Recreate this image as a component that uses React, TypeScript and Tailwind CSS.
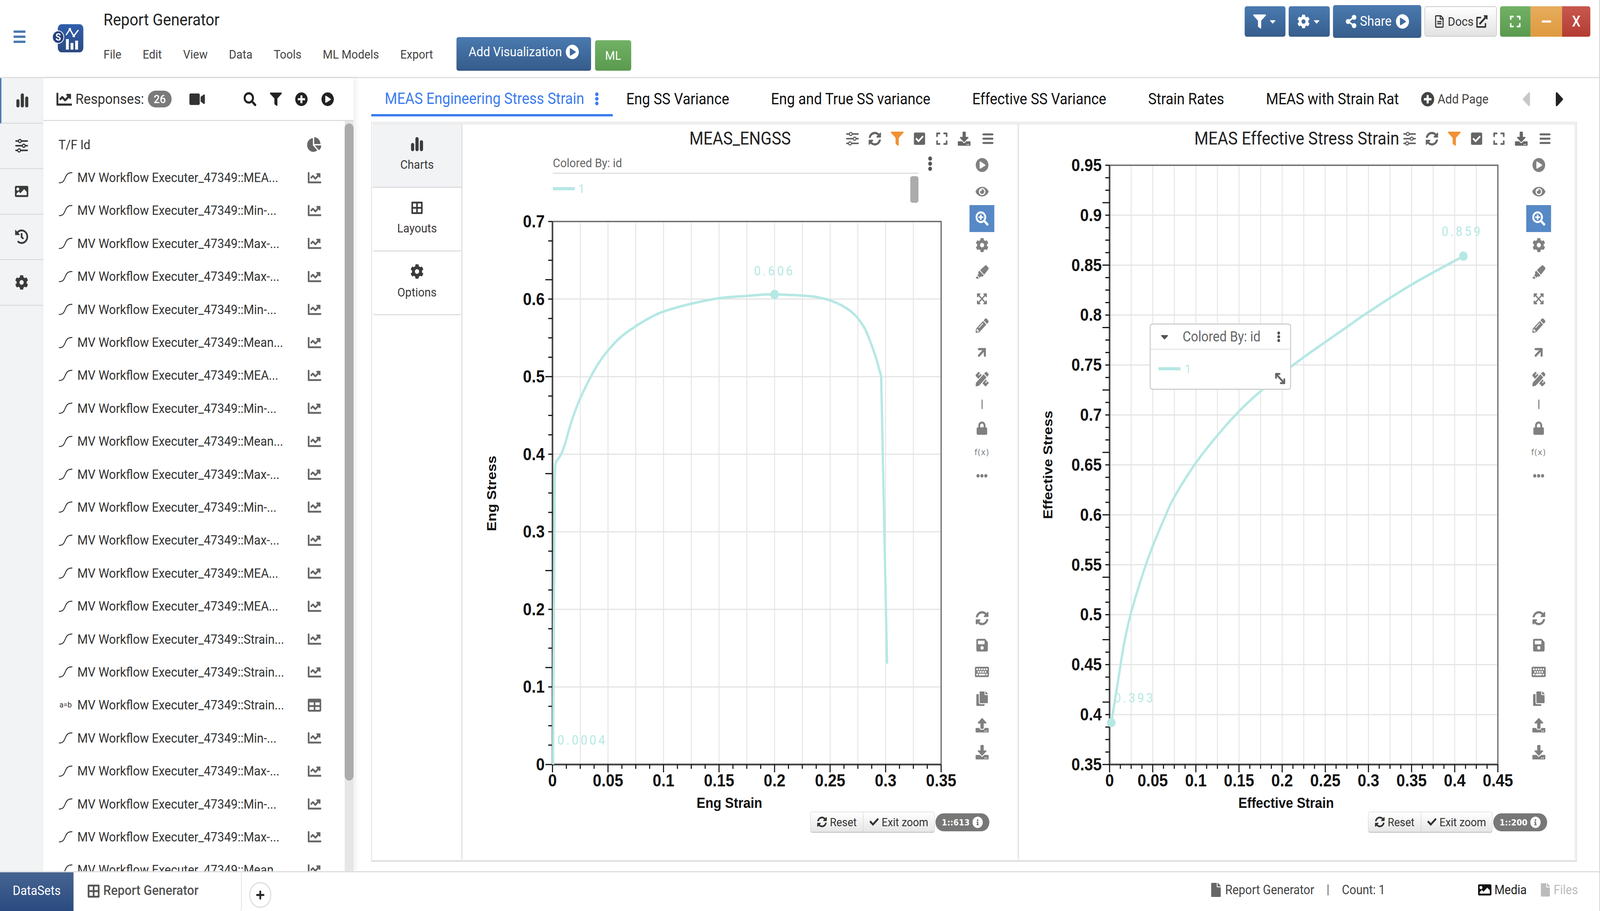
import type { ReactNode } from 'react';
import {
  FaBorderAll, FaCaretDown, FaCaretLeft, FaCaretRight, FaChartLine, FaChartPie, FaCheck, FaCheckSquare, FaCog,
  FaCopy, FaDownload, FaEllipsisH, FaEllipsisV, FaExpand, FaExpandArrowsAlt, FaExternalLinkAlt, FaEye, FaFile,
  FaFilter, FaHighlighter, FaHistory, FaImage, FaInfoCircle, FaKeyboard, FaLock, FaMinus, FaPencilAlt, FaPencilRuler,
  FaPlayCircle, FaPlus, FaPlusCircle, FaRegFileAlt, FaSave, FaSearch, FaSearchPlus, FaShareAlt, FaSyncAlt,
  FaTable, FaUpload, FaVideo,
} from 'react-icons/fa';
import { ArrowUpRight, MoveDiagonal2 } from 'lucide-react';

const TEAL = '#b6e8e4';
const DESIGN_WIDTH = 4512;

function BarsIcon({ className }: { className?: string }) {
  return (
    <svg viewBox="0 0 34 36" className={className} fill="currentColor">
      <rect x="0" y="15" width="9" height="21" rx="4.5" />
      <rect x="12.5" y="0" width="9" height="36" rx="4.5" />
      <rect x="25" y="8" width="9" height="28" rx="4.5" />
    </svg>
  );
}

function SlidersIcon({ className, knob = 'white' }: { className?: string; knob?: string }) {
  return (
    <svg viewBox="0 0 36 36" className={className} fill="none" stroke="currentColor" strokeWidth="4" strokeLinecap="round">
      <path d="M2 6h32M2 18h32M2 30h32" />
      <circle cx="13" cy="6" r="4" fill={knob} strokeWidth="3" />
      <circle cx="24" cy="18" r="4" fill={knob} strokeWidth="3" />
      <circle cx="11" cy="30" r="4" fill={knob} strokeWidth="3" />
    </svg>
  );
}

function IntegralIcon() {
  return (
    <svg viewBox="0 0 40 30" className="w-[40px] h-[30px] shrink-0" fill="none" stroke="#333" strokeWidth="2.5" strokeLinecap="round">
      <path d="M2 28C12 28 15 24 19 15C23 6 27 2 38 2" />
    </svg>
  );
}

function MenuLines() {
  return (
    <svg viewBox="0 0 32 30" className="w-[32px] h-[30px]" fill="none" stroke="currentColor" strokeWidth="5" strokeLinecap="round">
      <path d="M3 4h26M3 15h26M3 26h26" />
    </svg>
  );
}

function Logo() {
  return (
    <svg viewBox="0 0 90 76" className="w-[90px] h-[76px]">
      <defs>
        <linearGradient id="logoFill" x1="0" y1="0" x2="0" y2="1">
          <stop offset="0" stopColor="#2f5eac" />
          <stop offset="1" stopColor="#2d4a80" />
        </linearGradient>
      </defs>
      <rect x="17" y="2" width="72" height="72" rx="11" fill="url(#logoFill)" />
      <circle cx="18" cy="35" r="16" fill="#24427a" stroke="white" strokeWidth="2" />
      <text x="18" y="44" textAnchor="middle" fontSize="25" fontWeight="700" fill="white" fontFamily="Roboto, sans-serif">S</text>
      <path d="M40 30l11-15 11 17 13-15" fill="none" stroke="white" strokeWidth="3.5" />
      <circle cx="51" cy="15" r="3.5" fill="white" />
      <circle cx="62" cy="32" r="3.5" fill="white" />
      <rect x="40" y="40" width="8" height="27" fill="white" />
      <rect x="53" y="50" width="8" height="17" fill="white" />
      <rect x="66" y="44" width="8" height="23" fill="white" />
    </svg>
  );
}

const responses: [string, string][] = [
  ['s', 'MEA...'], ['s', 'Min-...'], ['s', 'Max-...'], ['s', 'Max-...'], ['s', 'Min-...'], ['s', 'Mean...'],
  ['s', 'MEA...'], ['s', 'Min-...'], ['s', 'Mean...'], ['s', 'Max-...'], ['s', 'Min-...'], ['s', 'Max-...'],
  ['s', 'MEA...'], ['s', 'MEA...'], ['s', 'Strain...'], ['s', 'Strain...'], ['t', 'Strain...'], ['s', 'Min-...'],
  ['s', 'Max-...'], ['s', 'Min-...'], ['s', 'Max-...'], ['s', 'Mean...'],
];

function Rail() {
  const items = [
    <BarsIcon className="w-[34px] h-[36px]" />,
    <SlidersIcon className="w-[38px] h-[36px]" knob="#f1f3f5" />,
    <FaImage className="text-[38px]" />,
    <FaHistory className="text-[38px]" />,
    <FaCog className="text-[38px]" />,
  ];
  return (
    <div className="w-[122px] shrink-0 bg-[#f1f3f5] flex flex-col text-[#3a3a3a]">
      {items.map((icon, i) => (
        <div
          key={i}
          className={`h-[116.5px] flex items-center justify-center border-b-[3px] border-[#dedede] ${i === 0 ? 'border-l-4 border-l-[#4a7ab0]' : ''}`}
        >
          {icon}
        </div>
      ))}
    </div>
  );
}

function ResponsesPanel() {
  return (
    <div className="w-[875px] shrink-0 bg-white shadow-[6px_0_14px_rgba(0,0,0,0.07)] flex flex-col z-10">
      <div className="h-[110px] shrink-0 border-b-[3px] border-[#dedede] flex items-center pl-[37px] text-[#333]">
        <FaChartLine className="text-[44px] mr-[10px]" />
        <span className="text-[37.5px] w-[204px] whitespace-nowrap">Responses:</span>
        <span className="w-[67px] h-[43px] rounded-full bg-[#7a7a7a] text-white text-[30px] font-medium flex items-center justify-center">26</span>
        <FaVideo className="text-[44px] ml-[50px]" />
        <FaSearch className="text-[36px] ml-[109px] text-[#222]" />
        <FaFilter className="text-[34px] ml-[38px] text-[#222]" />
        <FaPlusCircle className="text-[36px] ml-[37px] text-[#222]" />
        <FaPlayCircle className="text-[36px] ml-[38px] text-[#222]" />
      </div>
      <div className="flex-1 flex min-h-0">
        <div className="flex-1 overflow-hidden pt-[18px] pl-[43px] pr-[66px] text-[#333]">
          <div className="h-[84.4px] flex items-center justify-between">
            <span className="text-[34px]">T/F Id</span>
            <FaChartPie className="text-[40px] text-[#666]" />
          </div>
          {responses.map(([kind, tail], i) => (
            <div key={i} className="h-[84.4px] flex items-center">
              {kind === 's' ? (
                <IntegralIcon />
              ) : (
                <span className="w-[40px] shrink-0 text-[21px] text-center">a=b</span>
              )}
              <span className="ml-[13px] text-[34px] whitespace-nowrap">MV Workflow Executer_47349::{tail}</span>
              <span className="ml-auto text-[#666]">
                {kind === 's' ? <FaChartLine className="text-[38px]" /> : <FaTable className="text-[38px]" />}
              </span>
            </div>
          ))}
        </div>
        <div className="w-[25px] shrink-0 bg-[#e6e6e6]">
          <div className="w-full h-[1682px] mt-[6px] rounded-full bg-[#ababab]" />
        </div>
      </div>
    </div>
  );
}

function TabStrip() {
  const tabs = ['Eng SS Variance', 'Eng and True SS variance', 'Effective SS Variance', 'Strain Rates', 'MEAS with Strain Rat'];
  return (
    <div className="h-[112px] shrink-0 flex items-center pb-[4px] text-[40px] text-[#111]">
      <div className="h-[98px] w-[681px] shrink-0 self-start pt-[14px] border-b-[6px] border-[#3b7cf0] flex items-center pl-[38px] text-[#3b7cf0]">
        <span className="whitespace-nowrap">MEAS Engineering Stress Strain</span>
        <FaEllipsisV className="text-[34px] ml-[19px]" />
      </div>
      <div className="flex items-center ml-[38px] gap-[118px]">
        {tabs.map((tab) => (
          <span key={tab} className="whitespace-nowrap">{tab}</span>
        ))}
      </div>
      <FaPlusCircle className="text-[38px] ml-[62px] text-[#444]" />
      <span className="text-[33.5px] text-[#444] ml-[9px] whitespace-nowrap">Add Page</span>
      <FaCaretLeft className="text-[62px] text-[#c8c8c8] ml-[74px]" />
      <FaCaretRight className="text-[62px] text-[#222] ml-[34px]" />
    </div>
  );
}

function SubTabs() {
  const items: [ReactNode, string][] = [
    [<BarsIcon className="w-[34px] h-[36px]" />, 'Charts'],
    [<FaBorderAll className="text-[36px]" />, 'Layouts'],
    [<FaCog className="text-[38px]" />, 'Options'],
  ];
  return (
    <div className="w-[250px] shrink-0 flex flex-col text-[#3a3a3a]">
      {items.map(([icon, label], i) => (
        <div
          key={label}
          className={`h-[163px] flex flex-col items-center justify-center gap-[10px] border-b-[3px] border-[#dedede] ${i === 0 ? 'bg-[#f1f3f5] rounded-t-md' : 'rounded-b-md'}`}
        >
          {icon}
          <span className="text-[32px]">{label}</span>
        </div>
      ))}
    </div>
  );
}

function smooth(pts: number[][]) {
  let d = `M${pts[0][0]} ${pts[0][1]}`;
  for (let i = 0; i < pts.length - 1; i++) {
    const p0 = pts[Math.max(i - 1, 0)];
    const p1 = pts[i];
    const p2 = pts[i + 1];
    const p3 = pts[Math.min(i + 2, pts.length - 1)];
    const c1 = [p1[0] + (p2[0] - p0[0]) / 6, p1[1] + (p2[1] - p0[1]) / 6];
    const c2 = [p2[0] - (p3[0] - p1[0]) / 6, p2[1] - (p3[1] - p1[1]) / 6];
    d += `C${c1[0]} ${c1[1]} ${c2[0]} ${c2[1]} ${p2[0]} ${p2[1]}`;
  }
  return d;
}

type PlotProps = {
  box: [number, number, number, number];
  plot: { left: number; right: number; top: number; bottom: number };
  xMax: number;
  yMin: number;
  yMax: number;
  yStep: number;
  xLabel: string;
  yLabel: string;
  yLabelX: number;
  yLabelY: number;
  xLabelX: number;
  curve: number[][];
  straight: number[][][];
  points: number[][];
  labels: [string, number, number][];
};

function Plot({ box, plot, xMax, yMin, yMax, yStep, xLabel, yLabel, yLabelX, yLabelY, xLabelX, curve, straight, points, labels }: PlotProps) {
  const sx = (v: number) => plot.left + (v / xMax) * (plot.right - plot.left);
  const sy = (v: number) => plot.top + ((yMax - v) / (yMax - yMin)) * (plot.bottom - plot.top);
  const toPx = (p: number[]) => [sx(p[0]), sy(p[1])];
  const fmt = (v: number) => String(+v.toFixed(2));

  const xMajors = Array.from({ length: Math.round(xMax / 0.05) + 1 }, (_, i) => i * 0.05);
  const xGrid = Array.from({ length: Math.round(xMax / 0.025) + 1 }, (_, i) => i * 0.025);
  const xMinor = Array.from({ length: Math.round(xMax / 0.0125) + 1 }, (_, i) => i * 0.0125);
  const yMajors = Array.from({ length: Math.round((yMax - yMin) / yStep) + 1 }, (_, i) => yMax - i * yStep);
  const yMinor = Array.from({ length: Math.round(((yMax - yMin) / yStep) * 4) + 1 }, (_, i) => yMax - (i * yStep) / 4);

  return (
    <svg
      width={box[2]}
      height={box[3]}
      viewBox={box.join(' ')}
      className="block shrink-0"
      fontFamily="'Liberation Sans', Arial, sans-serif"
    >
      {xGrid.map((v) => (
        <line key={v} x1={sx(v)} x2={sx(v)} y1={plot.top} y2={plot.bottom} stroke="#e4e4e4" strokeWidth="2.5" />
      ))}
      {yMajors.map((v) => (
        <line key={v} x1={plot.left} x2={plot.right} y1={sy(v)} y2={sy(v)} stroke="#e4e4e4" strokeWidth="3" />
      ))}
      <path d={`M${plot.left} ${plot.top}H${plot.right}V${plot.bottom}`} fill="none" stroke="#6e6e6e" strokeWidth="3.5" />
      <path d={`M${plot.left} ${plot.top}V${plot.bottom}H${plot.right}`} fill="none" stroke="#444" strokeWidth="4.5" />
      {yMinor.map((v, i) => (
        <line key={i} x1={plot.left - (i % 5 === 3 ? 20 : 12)} x2={plot.left} y1={sy(v)} y2={sy(v)} stroke="#111" strokeWidth="3" />
      ))}
      {xMinor.map((v, i) => (
        <line key={i} x1={sx(v)} x2={sx(v)} y1={plot.bottom} y2={plot.bottom + (i % 4 === 0 ? 20 : 11)} stroke="#111" strokeWidth="3" />
      ))}
      {yMajors.map((v) => (
        <text key={v} x={plot.left - 22} y={sy(v) + 15} textAnchor="end" fontSize="44" fontWeight="700" fill="#111">{fmt(v)}</text>
      ))}
      {xMajors.map((v) => (
        <text key={v} x={sx(v)} y={plot.bottom + 56} textAnchor="middle" fontSize="44" fontWeight="700" fill="#111">{fmt(v)}</text>
      ))}
      <text x={xLabelX} y={plot.bottom + 111} textAnchor="middle" fontSize="37" fontWeight="700" fill="#111">{xLabel}</text>
      <text
        x={yLabelX}
        y={yLabelY}
        textAnchor="middle"
        fontSize="37"
        fontWeight="700"
        fill="#111"
        transform={`rotate(-90 ${yLabelX} ${yLabelY})`}
      >
        {yLabel}
      </text>
      {straight.map((seg, i) => (
        <path key={i} d={`M${toPx(seg[0]).join(' ')}L${toPx(seg[1]).join(' ')}`} fill="none" stroke={TEAL} strokeWidth="6.5" />
      ))}
      <path d={smooth(curve.map(toPx))} fill="none" stroke={TEAL} strokeWidth="6.5" />
      {points.map((p) => (
        <circle key={p[0]} cx={sx(p[0])} cy={sy(p[1])} r="12" fill={TEAL} />
      ))}
      {labels.map(([t, x, y]) => (
        <text key={t} x={x} y={y} fontSize="34" fill={TEAL} letterSpacing="6" fontFamily="Roboto, sans-serif">{t}</text>
      ))}
    </svg>
  );
}

function ChartHeader({ title }: { title: string }) {
  return (
    <div className="h-[74px] shrink-0 grid grid-cols-[1fr_auto_1fr] items-center">
      <div />
      <span className="text-[45.5px] text-[#222] whitespace-nowrap">{title}</span>
      <div className="flex items-center justify-end gap-[27px] pr-[68px] text-[#666]">
        <SlidersIcon className="w-[36px] h-[36px]" />
        <FaSyncAlt className="text-[36px]" />
        <FaFilter className="text-[36px] text-[#f29134]" />
        <FaCheckSquare className="text-[36px]" />
        <FaExpand className="text-[36px]" />
        <FaDownload className="text-[36px]" />
        <span className="ml-[6px]"><MenuLines /></span>
      </div>
    </div>
  );
}

function ToolBtn({ children, active, short }: { children: ReactNode; active?: boolean; short?: boolean }) {
  return (
    <div className={`${short ? 'h-[61px]' : 'h-[68.5px]'} w-[70px] flex items-center justify-center ${active ? 'bg-[#5689c6] text-white' : ''}`}>
      {children}
    </div>
  );
}

function Toolbar() {
  return (
    <div className="w-[70px] shrink-0 flex flex-col text-[#808080] text-[37px] -mt-[4px]">
      <ToolBtn><FaPlayCircle /></ToolBtn>
      <ToolBtn><FaEye /></ToolBtn>
      <ToolBtn active><FaSearchPlus /></ToolBtn>
      <ToolBtn><FaCog /></ToolBtn>
      <ToolBtn><FaHighlighter /></ToolBtn>
      <ToolBtn><FaExpandArrowsAlt className="text-[32px]" /></ToolBtn>
      <ToolBtn><FaPencilAlt /></ToolBtn>
      <ToolBtn><ArrowUpRight size={40} strokeWidth={3.5} /></ToolBtn>
      <ToolBtn><FaPencilRuler /></ToolBtn>
      <ToolBtn short><span className="w-[3px] h-[24px] bg-[#808080]" /></ToolBtn>
      <ToolBtn short><FaLock className="text-[34px]" /></ToolBtn>
      <ToolBtn short><span className="text-[22px] tracking-[1px] font-['DejaVu_Sans']">f(x)</span></ToolBtn>
      <ToolBtn short><FaEllipsisH className="text-[32px]" /></ToolBtn>
      <div className="h-[300px]" />
      <ToolBtn><FaSyncAlt /></ToolBtn>
      <ToolBtn><FaSave /></ToolBtn>
      <ToolBtn><FaKeyboard className="text-[40px]" /></ToolBtn>
      <ToolBtn><FaCopy /></ToolBtn>
      <ToolBtn><FaUpload /></ToolBtn>
      <ToolBtn><FaDownload /></ToolBtn>
    </div>
  );
}

function ChartFooter({ count, pr }: { count: string; pr: string }) {
  return (
    <div className={`h-[122px] shrink-0 pb-[68px] flex items-center justify-end ${pr}`}>
      <div className="h-[54px] flex border border-[#ccc] border-b-[3px] rounded-md bg-linear-to-b from-white to-[#e6e6e6] text-[30px] text-[#333]">
        <div className="w-[149px] flex items-center justify-center gap-[8px] border-r border-[#ccc]">
          <FaSyncAlt className="text-[28px]" />
          <span>Reset</span>
        </div>
        <div className="w-[200px] flex items-center justify-center gap-[8px]">
          <FaCheck className="text-[26px]" />
          <span className="whitespace-nowrap">Exit zoom</span>
        </div>
      </div>
      <div className="w-[152px] h-[46px] ml-[2px] rounded-full bg-[#777] text-white flex items-center justify-center gap-[8px] font-['DejaVu_Sans'] font-bold text-[22px]">
        <span>{count}</span>
        <FaInfoCircle className="text-[30px]" />
      </div>
    </div>
  );
}

function EngChart() {
  return (
    <div className="w-[1572px] shrink-0 flex flex-col border-x-[3px] border-[#dedede]">
      <ChartHeader title="MEAS_ENGSS" />
      <div className="flex flex-1 min-h-0">
        <div className="w-[1430px] shrink-0 flex flex-col">
          <div className="h-[138px] shrink-0 pl-[255px] flex">
            <div className="w-[1031px] shrink-0">
              <div className="h-[53px] border-b-[3px] border-[#dedede] text-[32px] text-[#666] flex items-center">Colored By: id</div>
              <div className="flex">
                <div className="flex-1 flex items-center h-[76px]">
                  <span className="w-[62px] h-[8px] bg-[#b6e8e4]" />
                  <span className="ml-[10px] text-[32px] text-[#b6e8e4]">1</span>
                </div>
                <div className="w-[23px] h-[68px] mt-[6px] rounded-md bg-[#ababab]" />
              </div>
            </div>
            <FaEllipsisV className="text-[38px] text-[#555] ml-[14px] mt-[8px]" />
          </div>
          <Plot
            box={[1302, 530, 1430, 1548]}
            plot={{ left: 1556, right: 2652, top: 567, bottom: 1957 }}
            xMax={0.35}
            yMin={0}
            yMax={0.7}
            yStep={0.1}
            xLabel="Eng Strain"
            xLabelX={2055}
            yLabel="Eng Stress"
            yLabelX={1397}
            yLabelY={1263}
            curve={[
              [0.002, 0.361], [0.0025, 0.385], [0.0041, 0.392], [0.0071, 0.398], [0.0108, 0.411], [0.0162, 0.438],
              [0.021, 0.458], [0.025, 0.472], [0.0334, 0.497], [0.0418, 0.518], [0.0501, 0.534], [0.0615, 0.551],
              [0.075, 0.565], [0.0878, 0.576], [0.1, 0.584], [0.125, 0.594], [0.15, 0.601], [0.1745, 0.604], [0.2, 0.606],
              [0.24, 0.602], [0.265, 0.588], [0.28, 0.565], [0.29, 0.53], [0.296, 0.5],
            ]}
            straight={[[[0.0005, 0], [0.002, 0.361]], [[0.296, 0.5], [0.3013, 0.13]]]}
            points={[[0.2, 0.606]]}
            labels={[['0.606', 2124, 705], ['0.0004', 1570, 1906]]}
          />
        </div>
        <Toolbar />
      </div>
      <ChartFooter count="1::613" pr="pr-[80px]" />
    </div>
  );
}

function EffChart() {
  return (
    <div className="flex-1 min-w-0 flex flex-col relative">
      <ChartHeader title="MEAS Effective Stress Strain" />
      <div className="flex flex-1 min-h-0">
        <div className="w-[1431px] shrink-0">
          <Plot
            box={[2874, 392, 1431, 1686]}
            plot={{ left: 3130, right: 4225, top: 423, bottom: 1957 }}
            xMax={0.45}
            yMin={0.35}
            yMax={0.95}
            yStep={0.05}
            xLabel="Effective Strain"
            xLabelX={3628}
            yLabel="Effective Stress"
            yLabelX={2969}
            yLabelY={1190}
            curve={[
              [0.002, 0.392], [0.0096, 0.4325], [0.0164, 0.469], [0.0247, 0.5014], [0.0397, 0.544], [0.0497, 0.568],
              [0.063, 0.5955], [0.0748, 0.6175], [0.0995, 0.6514], [0.1245, 0.679], [0.15, 0.7036], [0.174, 0.723],
              [0.2096, 0.7478], [0.2342, 0.7635], [0.27, 0.785], [0.3, 0.803], [0.35, 0.8305], [0.41, 0.859],
            ]}
            straight={[]}
            points={[[0.002, 0.392], [0.41, 0.859]]}
            labels={[['0.859', 4066, 604], ['0.393', 3143, 1798]]}
          />
        </div>
        <Toolbar />
      </div>
      <ChartFooter count="1::200" pr="pr-[78px]" />
      <div className="absolute left-[369px] top-[510px] w-[399px] h-[170px] bg-white border-[3px] border-[#cfcfcf] rounded-lg flex flex-col">
        <div className="h-[64px] border-b-[2px] border-[#dedede] flex items-center text-[#666] text-[36px] pl-[22px] pr-[18px]">
          <FaCaretDown className="text-[34px] text-[#50535a] mr-[34px]" />
          <span className="whitespace-nowrap">Colored By: id</span>
          <FaEllipsisV className="text-[28px] text-[#50535a] ml-auto" />
        </div>
        <div className="flex-1 flex items-start pl-[22px] pt-[34px] relative">
          <span className="w-[62px] h-[8px] mt-[11px] bg-[#b6e8e4]" />
          <span className="ml-[12px] text-[32px] leading-[30px] text-[#b6e8e4]">1</span>
          <MoveDiagonal2 size={40} strokeWidth={3} className="absolute right-[8px] bottom-[6px] text-[#666]" />
        </div>
      </div>
    </div>
  );
}

function TopBar() {
  const menus = ['File', 'Edit', 'View', 'Data', 'Tools', 'ML Models', 'Export'];
  return (
    <div className="h-[200px] shrink-0 border-b-[3px] border-[#dedede] flex">
      <div className="w-[240px] shrink-0 flex">
        <div className="pl-[38px] pt-[78px] text-[#4a7ab0]">
          <svg viewBox="0 0 34 32" className="w-[34px] h-[32px]" fill="currentColor">
            <rect width="34" height="6" rx="1.5" />
            <rect y="13" width="34" height="6" rx="1.5" />
            <rect y="26" width="34" height="6" rx="1.5" />
          </svg>
        </div>
        <div className="ml-[74px] pt-[60px] shrink-0"><Logo /></div>
      </div>
      <div className="ml-[52px] w-[995px] shrink-0">
        <div className="h-[100px] pt-[24px] text-[43px] leading-[52px] text-[#222]">Report Generator</div>
        <div className="flex gap-[60px] text-[32px] text-[#444] leading-[40px] -mt-[1px] pt-[20px]">
          {menus.map((m) => <span key={m} className="whitespace-nowrap">{m}</span>)}
        </div>
      </div>
      <div className="flex items-start pt-[95px] gap-[11px] text-white text-[34px]">
        <div className="w-[380px] h-[86px] pb-[8px] rounded-md bg-linear-to-b from-[#4a7ab0] to-[#365d8c] border-b-[3px] border-[#2f5280] flex items-center justify-center gap-[10px]">
          <span className="whitespace-nowrap">Add Visualization</span>
          <FaPlayCircle className="text-[38px]" />
        </div>
        <div className="w-[102px] h-[78px] mt-[8px] rounded-md bg-linear-to-b from-[#72b165] to-[#5a9a4e] flex items-center justify-center text-[32px]">ML</div>
      </div>
      <div className="ml-auto flex items-start gap-[9px] pt-[16px] pr-[25px] text-white">
        <div className="w-[115px] h-[78px] rounded-md bg-linear-to-b from-[#4a7ab0] to-[#365d8c] flex items-center justify-center gap-[6px]">
          <FaFilter className="text-[36px]" /><FaCaretDown className="text-[26px]" />
        </div>
        <div className="w-[116px] h-[78px] rounded-md bg-linear-to-b from-[#4a7ab0] to-[#365d8c] flex items-center justify-center gap-[6px]">
          <FaCog className="text-[36px]" /><FaCaretDown className="text-[26px]" />
        </div>
        <div className="w-[249px] h-[84px] -mt-[3px] rounded-md bg-linear-to-b from-[#4a7ab0] to-[#365d8c] flex items-center justify-center gap-[8px] text-[35px]">
          <FaShareAlt className="text-[34px]" /><span>Share</span><FaPlayCircle className="text-[38px] ml-[4px]" />
        </div>
        <div className="w-[204px] h-[78px] rounded-md bg-linear-to-b from-white to-[#e2e2e2] border-2 border-[#ccc] text-[#333] flex items-center justify-center gap-[8px] text-[32px]">
          <FaRegFileAlt className="text-[32px]" /><span>Docs</span><FaExternalLinkAlt className="text-[32px]" />
        </div>
        <div className="flex h-[78px] rounded-md overflow-hidden">
          <div className="w-[86px] bg-linear-to-b from-[#72b165] to-[#5a9a4e] flex items-center justify-center"><FaExpand className="text-[34px]" /></div>
          <div className="w-[89px] bg-linear-to-b from-[#e6ac5d] to-[#df9a3e] flex items-center justify-center"><FaMinus className="text-[30px]" /></div>
          <div className="w-[80px] bg-linear-to-b from-[#c9584f] to-[#b33c32] flex items-center justify-center text-[38px] font-medium">X</div>
        </div>
      </div>
    </div>
  );
}

function StatusBar() {
  return (
    <div className="h-[102px] shrink-0 border-t-[3px] border-[#dedede] flex bg-white z-20">
      <div className="w-[207px] shrink-0 flex items-center justify-center text-white text-[33.5px] pb-[4px] bg-linear-to-b from-[#466491] to-[#2b4a80]">DataSets</div>
      <div className="w-[475px] shrink-0 border-l-2 border-r-2 border-[#dedede] rounded-r-md flex items-center pl-[36px] pb-[4px] text-[#555] font-medium text-[35px] gap-[8px]">
        <FaBorderAll className="text-[38px]" />
        <span className="whitespace-nowrap">Report Generator</span>
      </div>
      <div className="ml-[21px] mt-[25px] w-[62px] h-[66px] rounded-full border-[3px] border-[#dedede] flex items-center justify-center text-[#222]">
        <FaPlus className="text-[26px]" />
      </div>
      <div className="ml-auto flex items-center pb-[10px] pr-[60px] text-[33px] text-[#444]">
        <FaFile className="text-[36px] text-[#666]" />
        <span className="ml-[8px] whitespace-nowrap">Report Generator</span>
        <span className="mx-[38px] w-[2px] h-[28px] bg-[#444]" />
        <span className="whitespace-nowrap">Count: 1</span>
        <FaImage className="text-[38px] text-[#111] ml-[262px]" />
        <span className="ml-[8px] text-[#222]">Media</span>
        <FaFile className="text-[34px] text-[#bbb] ml-[36px]" />
        <span className="ml-[6px] text-[#bbb]">Files</span>
      </div>
    </div>
  );
}

export default function App() {
  // the browser opens at 4096px wide rather than the 4512px design, so squeeze the whole page to fit
  const fit = window.innerWidth / DESIGN_WIDTH;
  return (
    <div className="w-screen h-screen overflow-hidden">
      <div
        className="w-[4512px] h-[2332px] origin-top-left bg-white flex flex-col border-r-2 border-[#cfcfcf] font-['Roboto',sans-serif]"
        style={{ transform: `scaleX(${fit})` }}
      >
        <TopBar />
        <div className="flex-1 flex min-h-0">
          <Rail />
          <ResponsesPanel />
          <div className="flex-1 min-w-0 pl-[50px] flex flex-col overflow-hidden">
            <TabStrip />
            <div className="w-[3400px] h-[1894px] shrink-0 border-t-2 border-x-2 border-b-[4px] border-[#dedede] p-[2px]">
              <div className="h-full flex border-t-2 border-r-2 border-[#dedede]">
                <SubTabs />
                <EngChart />
                <EffChart />
              </div>
            </div>
          </div>
        </div>
        <StatusBar />
      </div>
    </div>
  );
}
